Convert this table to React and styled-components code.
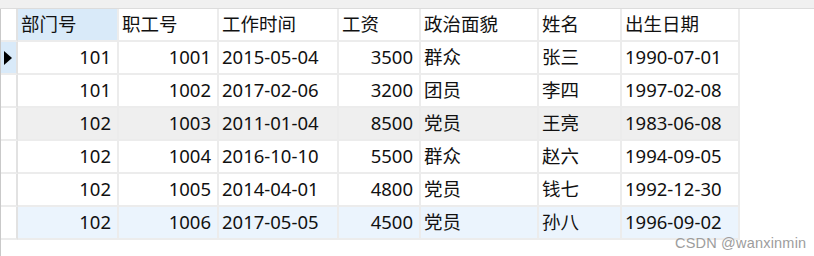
import React from "react";
import styled, { createGlobalStyle } from "styled-components";

const Global = createGlobalStyle`
  html, body { margin: 0; padding: 0; background: #ffffff; }
  body { font-family: "Noto Sans", "Noto Sans CJK SC", sans-serif; }
`;

const Page = styled.div`
  position: relative;
  width: 814px;
  height: 256px;
  overflow: hidden;
  background: #fff;
`;

const TopStrip = styled.div`
  height: 8px;
  background: #f0f0f0;
  border-bottom: 1px solid #dcdcdc;
`;

const Body = styled.div`
  height: 247px;
  border-left: 1px solid #c9c9c9;
`;

const COLS = "17px 101px 100px 120px 82px 118px 83px 118px";

const Grid = styled.div`
  display: grid;
  grid-template-columns: ${COLS};
  grid-auto-rows: 33px;
  width: max-content;
  font-family: "Noto Sans", "Noto Sans CJK SC", sans-serif;
  font-size: 18.5px;
  color: #111;
`;

const Cell = styled.div`
  box-sizing: border-box;
  display: flex;
  align-items: center;
  justify-content: ${(p) => (p.$right ? "flex-end" : "flex-start")};
  padding: ${(p) => (p.$right ? "0 6px 1px 0" : "0 0 1px 3px")};
  border-right: 2px solid #ececec;
  border-bottom: 2px solid #ececec;
  background: ${(p) => p.$bg || "#ffffff"};
  white-space: nowrap;
  line-height: 1;
`;

const Indicator = styled(Cell)`
  padding: 0;
  justify-content: center;
  border-right-color: #e2e2e2;
`;

const Arrow = styled.span`
  width: 0;
  height: 0;
  border-top: 7px solid transparent;
  border-bottom: 7px solid transparent;
  border-left: 8px solid #000;
  margin-left: -1px;
`;

const Watermark = styled.div`
  position: absolute;
  left: 675px;
  top: 235px;
  font-family: "Liberation Sans", "Noto Sans", sans-serif;
  font-size: 14.5px;
  color: #9d9d9d;
  letter-spacing: 0.2px;
`;

const headers = ["部门号", "职工号", "工作时间", "工资", "政治面貌", "姓名", "出生日期"];
const rows = [
  ["101", "1001", "2015-05-04", "3500", "群众", "张三", "1990-07-01"],
  ["101", "1002", "2017-02-06", "3200", "团员", "李四", "1997-02-08"],
  ["102", "1003", "2011-01-04", "8500", "党员", "王亮", "1983-06-08"],
  ["102", "1004", "2016-10-10", "5500", "群众", "赵六", "1994-09-05"],
  ["102", "1005", "2014-04-01", "4800", "党员", "钱七", "1992-12-30"],
  ["102", "1006", "2017-05-05", "4500", "党员", "孙八", "1996-09-02"],
];
const rightAligned = [true, true, false, true, false, false, false];
const rowBg = [null, null, "#efefef", null, null, "#ebf4fd"];

export default function App() {
  return (
    <Page>
      <Global />
      <TopStrip />
      <Body>
        <Grid>
          <Indicator />
          {headers.map((h, i) => (
            <Cell key={h} $bg={i === 0 ? "#d9eaf9" : undefined}>
              {h}
            </Cell>
          ))}
          {rows.map((r, ri) => (
            <React.Fragment key={ri}>
              <Indicator $bg={ri === 0 ? "#d9eaf9" : undefined}>
                {ri === 0 && <Arrow />}
              </Indicator>
              {r.map((v, ci) => (
                <Cell key={ci} $right={rightAligned[ci]} $bg={rowBg[ri]}>
                  {v}
                </Cell>
              ))}
            </React.Fragment>
          ))}
        </Grid>
      </Body>
      <Watermark>CSDN @wanxinmin</Watermark>
    </Page>
  );
}
